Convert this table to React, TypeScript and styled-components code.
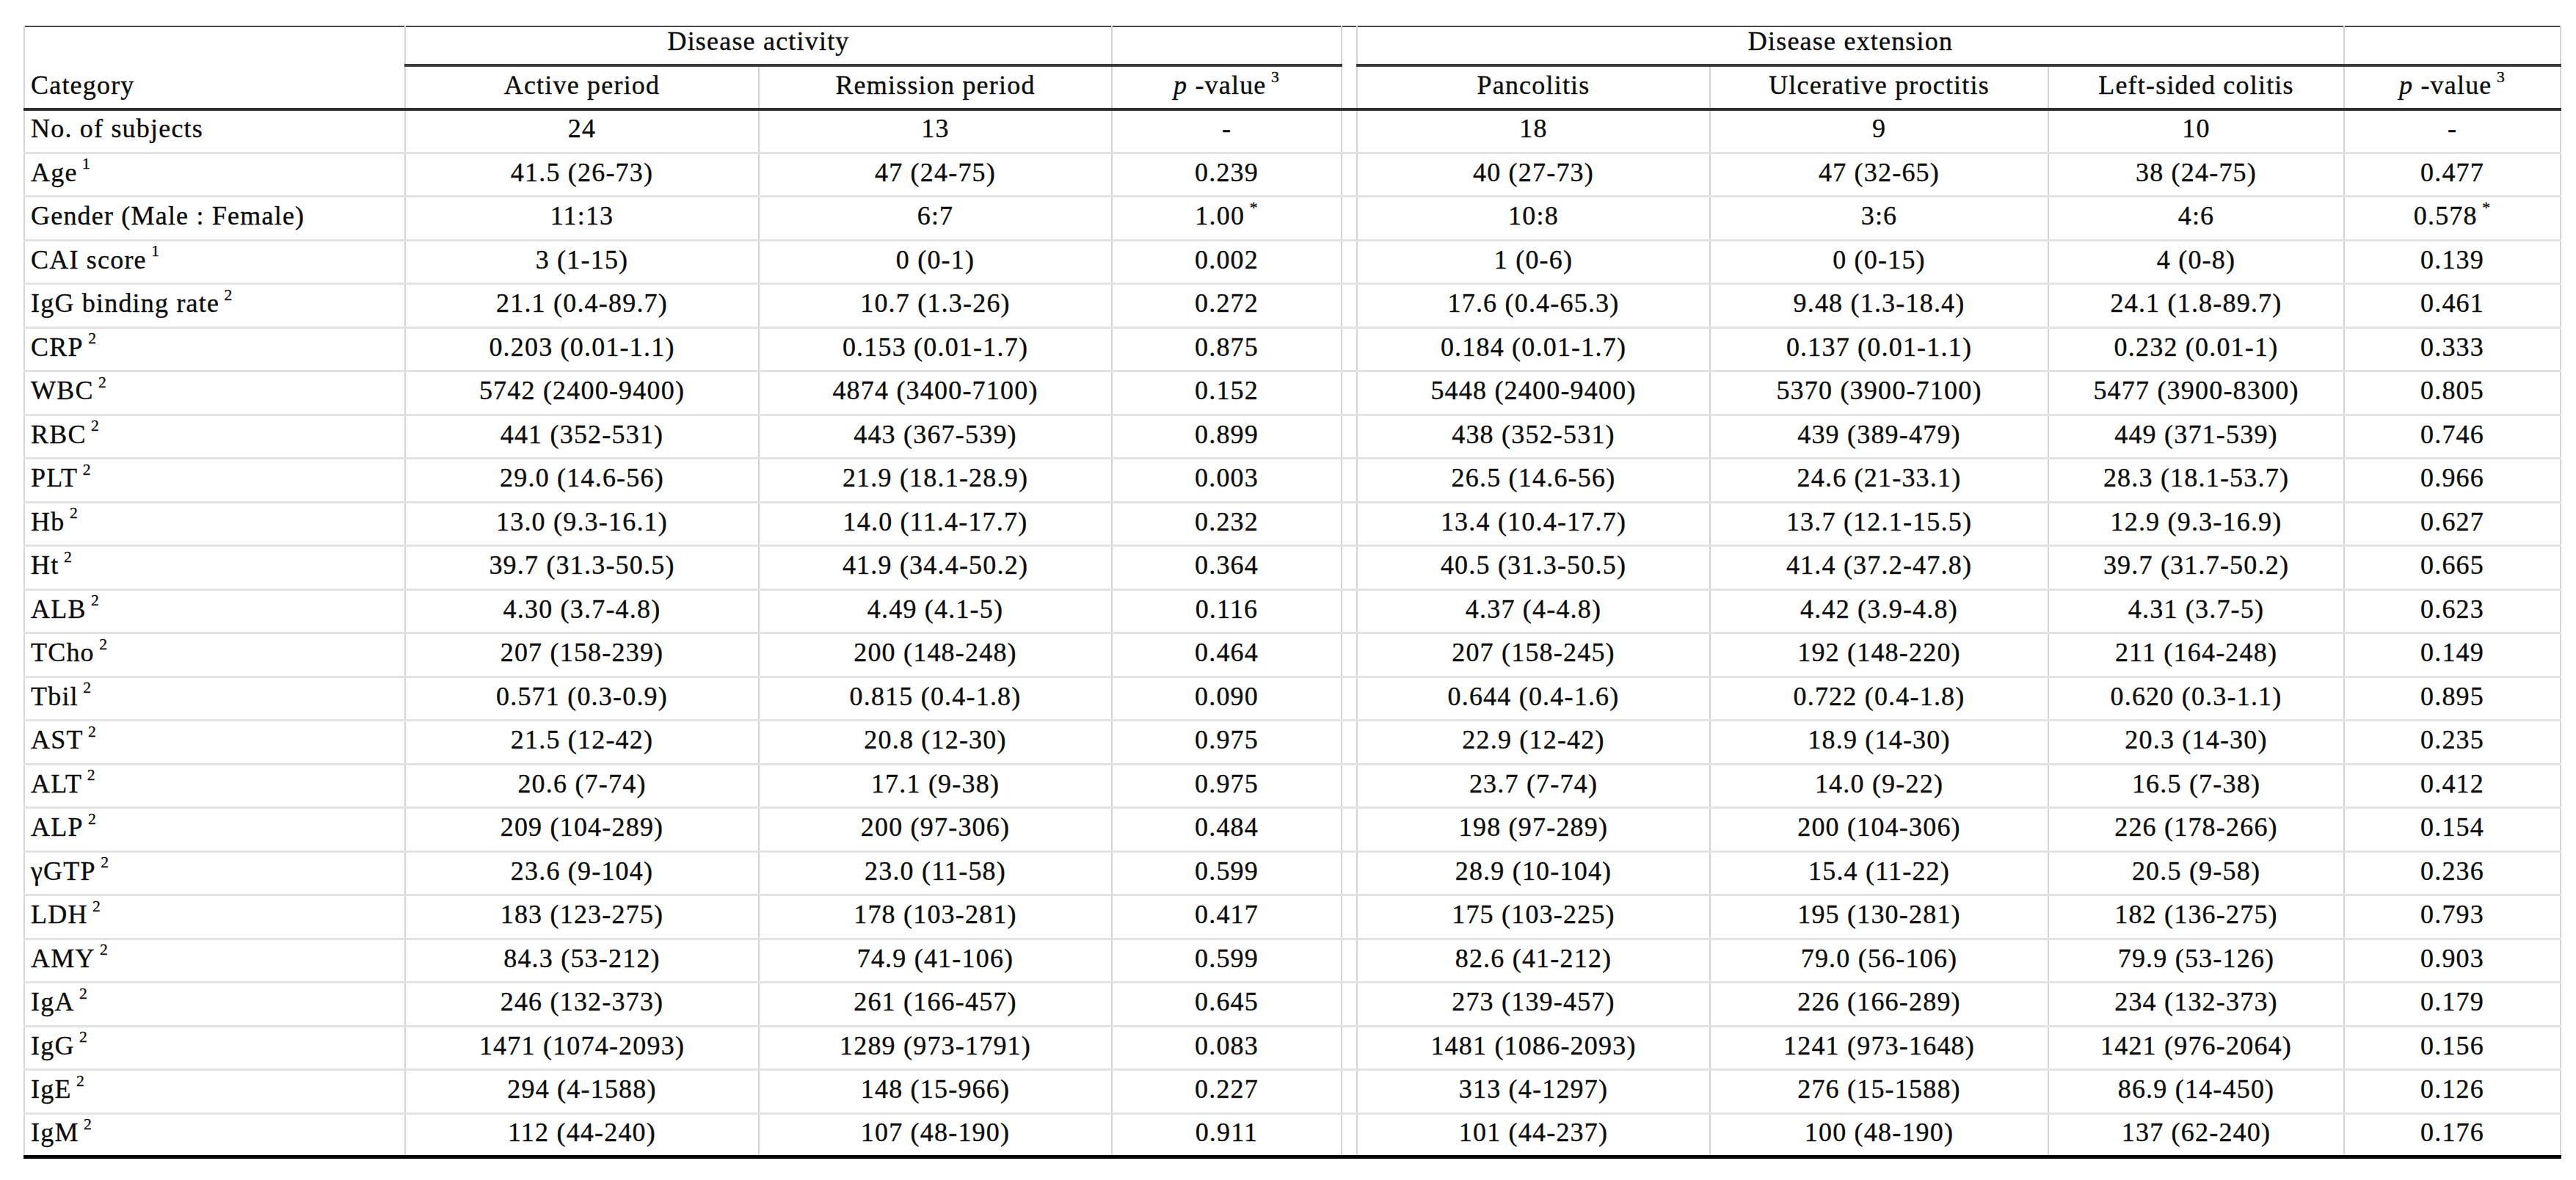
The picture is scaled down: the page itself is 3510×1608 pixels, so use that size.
import React from "react";
import styled, { createGlobalStyle } from "styled-components";

const GlobalStyle = createGlobalStyle`
  html, body {
    margin: 0;
    padding: 0;
    background: #fff;
  }
  body {
    font-family: "Liberation Serif", "Times New Roman", serif;
    color: #0c0c0c;
  }
`;

const Page = styled.div`
  padding: 35px 0 0 32px;
`;

const Table = styled.table`
  border-collapse: collapse;
  table-layout: fixed;
  width: 3456px;
  font-size: 36px;
  letter-spacing: 1.2px;
  line-height: 1.1;
  -webkit-text-stroke: 0.35px #0c0c0c;
  border-top: 2px solid #4a4a4a;
  border-bottom: 5px solid #000;
  border-left: 2px solid #d4d4d4;
  border-right: 2px solid #d4d4d4;
`;

const HeadRow = styled.tr<{ $h: number }>`
  height: ${p => p.$h}px;
`;

const HeadCell = styled.th<{ $left?: boolean; $under?: boolean; $thick?: boolean }>`
  font-weight: normal;
  text-align: ${p => (p.$left ? "left" : "center")};
  vertical-align: bottom;
  padding: 0 8px 10px;
  border-left: 2px solid #d4d4d4;
  border-bottom: ${p =>
    p.$thick ? "4px solid #2e2e2e" : p.$under ? "4px solid #3a3a3a" : "none"};
  white-space: nowrap;
`;

const BodyRow = styled.tr`
  height: 59.5px;
`;

const Cell = styled.td<{ $left?: boolean }>`
  text-align: ${p => (p.$left ? "left" : "center")};
  vertical-align: middle;
  padding: 0 8px 5px;
  border-left: 2px solid #d4d4d4;
  border-bottom: 3px solid #e3e3e3;
  white-space: nowrap;
`;

const Gap = styled.td<{ $head?: boolean }>`
  border-left: 2px solid #d4d4d4;
  border-right: 2px solid #d4d4d4;
  border-bottom: ${p => (p.$head ? "4px solid #2e2e2e" : "3px solid #e3e3e3")};
  padding: 0;
`;

const Sup = styled.span`
  font-size: 0.6em;
  position: relative;
  top: -0.75em;
  margin-left: 0.3em;
`;

const Ital = styled.i`
  font-style: italic;
`;

type Row = {
  label: string;
  note?: string;
  values: [string, string, string, string, string, string, string];
  stars?: boolean;
};

const rows: Row[] = [
  { label: "No. of subjects", values: ["24", "13", "-", "18", "9", "10", "-"] },
  { label: "Age", note: "1", values: ["41.5 (26-73)", "47 (24-75)", "0.239", "40 (27-73)", "47 (32-65)", "38 (24-75)", "0.477"] },
  { label: "Gender (Male : Female)", stars: true, values: ["11:13", "6:7", "1.00", "10:8", "3:6", "4:6", "0.578"] },
  { label: "CAI score", note: "1", values: ["3 (1-15)", "0 (0-1)", "0.002", "1 (0-6)", "0 (0-15)", "4 (0-8)", "0.139"] },
  { label: "IgG binding rate", note: "2", values: ["21.1 (0.4-89.7)", "10.7 (1.3-26)", "0.272", "17.6 (0.4-65.3)", "9.48 (1.3-18.4)", "24.1 (1.8-89.7)", "0.461"] },
  { label: "CRP", note: "2", values: ["0.203 (0.01-1.1)", "0.153 (0.01-1.7)", "0.875", "0.184 (0.01-1.7)", "0.137 (0.01-1.1)", "0.232 (0.01-1)", "0.333"] },
  { label: "WBC", note: "2", values: ["5742 (2400-9400)", "4874 (3400-7100)", "0.152", "5448 (2400-9400)", "5370 (3900-7100)", "5477 (3900-8300)", "0.805"] },
  { label: "RBC", note: "2", values: ["441 (352-531)", "443 (367-539)", "0.899", "438 (352-531)", "439 (389-479)", "449 (371-539)", "0.746"] },
  { label: "PLT", note: "2", values: ["29.0 (14.6-56)", "21.9 (18.1-28.9)", "0.003", "26.5 (14.6-56)", "24.6 (21-33.1)", "28.3 (18.1-53.7)", "0.966"] },
  { label: "Hb", note: "2", values: ["13.0 (9.3-16.1)", "14.0 (11.4-17.7)", "0.232", "13.4 (10.4-17.7)", "13.7 (12.1-15.5)", "12.9 (9.3-16.9)", "0.627"] },
  { label: "Ht", note: "2", values: ["39.7 (31.3-50.5)", "41.9 (34.4-50.2)", "0.364", "40.5 (31.3-50.5)", "41.4 (37.2-47.8)", "39.7 (31.7-50.2)", "0.665"] },
  { label: "ALB", note: "2", values: ["4.30 (3.7-4.8)", "4.49 (4.1-5)", "0.116", "4.37 (4-4.8)", "4.42 (3.9-4.8)", "4.31 (3.7-5)", "0.623"] },
  { label: "TCho", note: "2", values: ["207 (158-239)", "200 (148-248)", "0.464", "207 (158-245)", "192 (148-220)", "211 (164-248)", "0.149"] },
  { label: "Tbil", note: "2", values: ["0.571 (0.3-0.9)", "0.815 (0.4-1.8)", "0.090", "0.644 (0.4-1.6)", "0.722 (0.4-1.8)", "0.620 (0.3-1.1)", "0.895"] },
  { label: "AST", note: "2", values: ["21.5 (12-42)", "20.8 (12-30)", "0.975", "22.9 (12-42)", "18.9 (14-30)", "20.3 (14-30)", "0.235"] },
  { label: "ALT", note: "2", values: ["20.6 (7-74)", "17.1 (9-38)", "0.975", "23.7 (7-74)", "14.0 (9-22)", "16.5 (7-38)", "0.412"] },
  { label: "ALP", note: "2", values: ["209 (104-289)", "200 (97-306)", "0.484", "198 (97-289)", "200 (104-306)", "226 (178-266)", "0.154"] },
  { label: "γGTP", note: "2", values: ["23.6 (9-104)", "23.0 (11-58)", "0.599", "28.9 (10-104)", "15.4 (11-22)", "20.5 (9-58)", "0.236"] },
  { label: "LDH", note: "2", values: ["183 (123-275)", "178 (103-281)", "0.417", "175 (103-225)", "195 (130-281)", "182 (136-275)", "0.793"] },
  { label: "AMY", note: "2", values: ["84.3 (53-212)", "74.9 (41-106)", "0.599", "82.6 (41-212)", "79.0 (56-106)", "79.9 (53-126)", "0.903"] },
  { label: "IgA", note: "2", values: ["246 (132-373)", "261 (166-457)", "0.645", "273 (139-457)", "226 (166-289)", "234 (132-373)", "0.179"] },
  { label: "IgG", note: "2", values: ["1471 (1074-2093)", "1289 (973-1791)", "0.083", "1481 (1086-2093)", "1241 (973-1648)", "1421 (976-2064)", "0.156"] },
  { label: "IgE", note: "2", values: ["294 (4-1588)", "148 (15-966)", "0.227", "313 (4-1297)", "276 (15-1588)", "86.9 (14-450)", "0.126"] },
  { label: "IgM", note: "2", values: ["112 (44-240)", "107 (48-190)", "0.911", "101 (44-237)", "100 (48-190)", "137 (62-240)", "0.176"] },
];

// column widths measured off the reference
const widths = [519, 482, 481, 313, 21, 481, 461, 403, 295];

const PValue = () => (
  <>
    <Ital>p</Ital> -value<Sup>3</Sup>
  </>
);

export default function App() {
  return (
    <>
      <GlobalStyle />
      <Page>
        <Table>
          <colgroup>
            {widths.map((w, i) => (
              <col key={i} style={{ width: w }} />
            ))}
          </colgroup>
          <thead>
            <HeadRow $h={52}>
              <HeadCell $left $thick rowSpan={2}>Category</HeadCell>
              <HeadCell $under colSpan={2}>Disease activity</HeadCell>
              <HeadCell $under />
              <Gap $head rowSpan={2} />
              <HeadCell $under colSpan={3}>Disease extension</HeadCell>
              <HeadCell $under />
            </HeadRow>
            <HeadRow $h={60}>
              <HeadCell $thick>Active period</HeadCell>
              <HeadCell $thick>Remission period</HeadCell>
              <HeadCell $thick><PValue /></HeadCell>
              <HeadCell $thick>Pancolitis</HeadCell>
              <HeadCell $thick>Ulcerative proctitis</HeadCell>
              <HeadCell $thick>Left-sided colitis</HeadCell>
              <HeadCell $thick><PValue /></HeadCell>
            </HeadRow>
          </thead>
          <tbody>
            {rows.map(r => (
              <BodyRow key={r.label}>
                <Cell $left>
                  {r.label}
                  {r.note && <Sup>{r.note}</Sup>}
                </Cell>
                {r.values.slice(0, 3).map((v, i) => (
                  <Cell key={i}>
                    {v}
                    {r.stars && i === 2 && <Sup>*</Sup>}
                  </Cell>
                ))}
                <Gap />
                {r.values.slice(3).map((v, i) => (
                  <Cell key={i}>
                    {v}
                    {r.stars && i === 3 && <Sup>*</Sup>}
                  </Cell>
                ))}
              </BodyRow>
            ))}
          </tbody>
        </Table>
      </Page>
    </>
  );
}
